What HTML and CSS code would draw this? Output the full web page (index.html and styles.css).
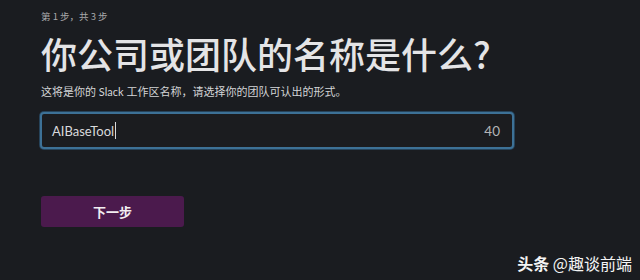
FILE: index.html
```html
<!DOCTYPE html>
<html lang="zh">
<head>
<meta charset="utf-8">
<link rel="stylesheet" href="styles.css">
</head>
<body>
<main class="page">
  <div class="step">第 1 步，共 3 步</div>
  <h1 class="title">你公司或团队的名称是什么?</h1>
  <p class="subtitle">这将是你的 Slack 工作区名称，请选择你的团队可认出的形式。</p>
  <div class="field">
    <span class="value">AIBaseTool</span><span class="caret"></span>
    <span class="count">40</span>
  </div>
  <button class="next">下一步</button>
</main>
<div class="watermark"><b>头条</b> @趣谈前端</div>
</body>
</html>
```

FILE: styles.css
```css
html, body {
  margin: 0;
  padding: 0;
  background: #1a1c20;
  width: 640px;
  height: 280px;
  overflow: hidden;
  font-family: "Lato", "Noto Sans CJK SC", sans-serif;
}
.page {
  padding: 9px 0 0 41px;
  display: flex;
  flex-direction: column;
  align-items: flex-start;
}
.step {
  font-family: "Noto Sans CJK SC", sans-serif;
  font-size: 9.5px;
  line-height: 14px;
  color: #a8a9ab;
}
.title {
  margin: 9px 0 0 0;
  font-family: "Noto Sans CJK SC", sans-serif;
  font-size: 36px;
  line-height: 42px;
  font-weight: 500;
  color: #e4e4e6;
}
.subtitle {
  margin: 10px 0 0 0;
  font-family: "Lato", "Noto Sans CJK SC", sans-serif;
  font-size: 11px;
  line-height: 15px;
  color: #d4d5d7;
}
.field {
  margin: 13px 0 0 -1px;
  box-sizing: border-box;
  width: 474px;
  height: 37px;
  border: 2px solid #3d7196;
  box-shadow: 0 0 0 1px #26435a;
  border-radius: 4px;
  background: #1b1c1f;
  display: flex;
  align-items: center;
  padding: 0 12px 0 10px;
  color: #d8d9db;
  font-family: "Lato", sans-serif;
  font-size: 13px;
}
.caret {
  width: 1px;
  height: 17px;
  background: #d8d9db;
  margin-left: 1px;
}
.count {
  margin-left: auto;
  color: #b4b5b7;
  font-size: 13.5px;
}
.next {
  margin-top: 47px;
  width: 143px;
  height: 31px;
  border: none;
  border-radius: 3px;
  background: #4b1a4d;
  color: #f2eef2;
  font-family: "Noto Sans CJK SC", sans-serif;
  font-size: 13px;
  font-weight: 700;
  padding: 0;
}
.watermark {
  position: absolute;
  right: 8px;
  top: 251px;
  color: #f4f4f4;
  font-family: "Noto Sans CJK SC", sans-serif;
  font-size: 16px;
  line-height: 24px;
}
.watermark b {
  font-weight: 700;
}
```
